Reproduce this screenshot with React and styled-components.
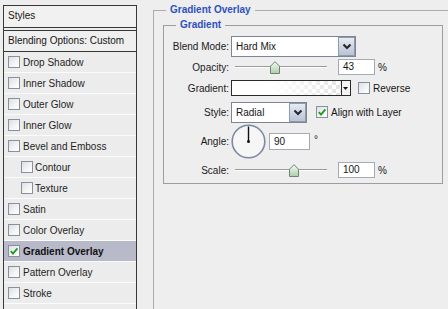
import React from 'react'
import styled, { createGlobalStyle } from 'styled-components'

const GlobalStyle = createGlobalStyle`
  html, body {
    margin: 0;
    padding: 0;
    background: #eeeeee;
  }
  body {
    font-family: "Liberation Sans", Arial, sans-serif;
    font-size: 10px;
    color: #161616;
  }
`

const effects = [
  { label: 'Drop Shadow' },
  { label: 'Inner Shadow' },
  { label: 'Outer Glow' },
  { label: 'Inner Glow' },
  { label: 'Bevel and Emboss' },
  { label: 'Contour', sub: true },
  { label: 'Texture', sub: true },
  { label: 'Satin' },
  { label: 'Color Overlay' },
  { label: 'Gradient Overlay', checked: true, active: true },
  { label: 'Pattern Overlay' },
  { label: 'Stroke' },
]

const CheckMark = () => (
  <svg width="10" height="10" viewBox="0 0 10 10">
    <path d="M1.8 5.2 L4 7.6 L8.4 2.4" fill="none" stroke="#1f9a1f" strokeWidth="1.8" />
  </svg>
)

const Checkbox = ({ checked }) => <CheckBox>{checked && <CheckMark />}</CheckBox>

const Chevron = () => (
  <svg width="10" height="7" viewBox="0 0 10 7">
    <path d="M1.5 1.5 L5 5 L8.5 1.5" fill="none" stroke="#2a2a2a" strokeWidth="2.2" />
  </svg>
)

const Select = ({ value, width }) => (
  <SelectBox $width={width}>
    <SelectValue>{value}</SelectValue>
    <SelectButton>
      <Chevron />
    </SelectButton>
  </SelectBox>
)

const Slider = ({ value, min, max }) => {
  const pct = (value - min) / (max - min)
  return (
    <SliderWrap>
      <Track />
      <Thumb style={{ left: 4 + pct * 92 - 5 }}>
        <svg width="10" height="13" viewBox="0 0 10 13">
          <defs>
            <linearGradient id="thumbFill" x1="0" y1="0" x2="0" y2="1">
              <stop offset="0" stopColor="#f6fbf6" />
              <stop offset="1" stopColor="#a9cfa9" />
            </linearGradient>
          </defs>
          <path d="M0.5 12.5 V5.2 L5 0.7 L9.5 5.2 V12.5 Z" fill="url(#thumbFill)" stroke="#728272" />
        </svg>
      </Thumb>
    </SliderWrap>
  )
}

const Dial = ({ angle }) => {
  const r = (angle * Math.PI) / 180
  return (
    <svg width="35" height="35" viewBox="0 0 35 35">
      <circle cx="17.5" cy="17.5" r="16.3" fill="#f6f6f6" stroke="#7c8a9e" strokeWidth="1.6" />
      <line
        x1="17.5"
        y1="17.5"
        x2={17.5 + Math.cos(r) * 15}
        y2={17.5 - Math.sin(r) * 15}
        stroke="#111"
        strokeWidth="1.4"
      />
      <circle cx="17.5" cy="17.5" r="1.5" fill="#111" />
    </svg>
  )
}

const App = () => {
  return (
    <>
      <GlobalStyle />
      <Window>
        <StylesPanel>
          <PanelHeader>Styles</PanelHeader>
          <BlendingRow>Blending Options: Custom</BlendingRow>
          {effects.map((e) => (
            <EffectRow key={e.label} $sub={e.sub} $active={e.active}>
              <Checkbox checked={e.checked} />
              <span>{e.label}</span>
            </EffectRow>
          ))}
        </StylesPanel>

        <OuterGroup>
          <Legend $inset={3}>Gradient Overlay</Legend>
          <InnerGroup>
            <Legend $inset={8}>Gradient</Legend>
            <FormGrid>
              <Label>Blend Mode:</Label>
              <Controls>
                <Select value="Hard Mix" width={125} />
              </Controls>

              <Label>Opacity:</Label>
              <Controls>
                <Slider value={43} min={0} max={100} />
                <NumberBox>43</NumberBox>
                <Unit>%</Unit>
              </Controls>

              <Label>Gradient:</Label>
              <Controls>
                <Swatch>
                  <SwatchFill />
                  <SwatchButton>
                    <svg width="7" height="14" viewBox="0 0 7 14">
                      <path d="M1 6 H6 L3.5 9 Z" fill="#111" />
                    </svg>
                  </SwatchButton>
                </Swatch>
                <CheckLabel $gap={7}>
                  <Checkbox />
                  <span>Reverse</span>
                </CheckLabel>
              </Controls>

              <Label>Style:</Label>
              <Controls>
                <Select value="Radial" width={76} />
                <CheckLabel $gap={9}>
                  <Checkbox checked />
                  <span>Align with Layer</span>
                </CheckLabel>
              </Controls>

              <Label>Angle:</Label>
              <Controls>
                <Dial angle={90} />
                <NumberBox $width={41} $gap={3}>90</NumberBox>
                <Degree>°</Degree>
              </Controls>

              <Label>Scale:</Label>
              <Controls>
                <Slider value={100} min={10} max={150} />
                <NumberBox>100</NumberBox>
                <Unit>%</Unit>
              </Controls>
            </FormGrid>
          </InnerGroup>
        </OuterGroup>
      </Window>
    </>
  )
}

const Window = styled.div`
  display: flex;
  align-items: flex-start;
  height: 309px;
  overflow: hidden;
`

const StylesPanel = styled.div`
  flex-shrink: 0;
  box-sizing: border-box;
  width: 134px;
  height: 320px;
  margin: 5px 0 0 3px;
  border: 1px solid #383838;
  border-bottom: none;
  background: #ececec;
`

const PanelHeader = styled.div`
  height: 21px;
  line-height: 20px;
  padding-left: 4px;
  border-bottom: 1px solid #383838;
  background: #f1f1f1;
`

const BlendingRow = styled.div`
  height: 20px;
  line-height: 20px;
  margin-top: 2px;
  padding-left: 4px;
  border-top: 1px solid #383838;
  border-bottom: 1px solid #383838;
  background: #efefef;
`

const EffectRow = styled.div`
  display: flex;
  align-items: center;
  gap: ${(p) => (p.$sub ? 2 : 3)}px;
  height: 20px;
  padding-left: ${(p) => (p.$sub ? 17 : 4)}px;
  border-bottom: 1px solid #fbfbfb;
  background: ${(p) => (p.$active ? '#b8bac9' : 'transparent')};
  font-weight: ${(p) => (p.$active ? 'bold' : 'normal')};
  color: ${(p) => (p.$active ? '#111' : '#1e1e1e')};
`

const CheckBox = styled.span`
  display: inline-flex;
  align-items: center;
  justify-content: center;
  flex-shrink: 0;
  box-sizing: border-box;
  width: 12px;
  height: 12px;
  border: 1px solid #87909c;
  background: linear-gradient(135deg, #dcdfe3 0%, #f4f5f6 60%, #ffffff 100%);
`

const OuterGroup = styled.fieldset`
  flex-shrink: 0;
  box-sizing: border-box;
  width: 310px;
  min-height: 320px;
  margin: 4px 0 0 16px;
  padding: 3px 0 0 9px;
  border: 1px solid #ababab;
`

const InnerGroup = styled.fieldset`
  box-sizing: border-box;
  width: 280px;
  margin: 0;
  padding: 5px 0 0 4px;
  border: 1px solid #9d9d9d;
`

const Legend = styled.legend`
  margin-left: ${(p) => p.$inset}px;
  padding: 0 4px;
  line-height: 12px;
  font-weight: bold;
  color: #2d51be;
`

const FormGrid = styled.div`
  display: grid;
  grid-template-columns: 61px 1fr;
  grid-template-rows: 21px 20px 22px 26px 32px 26px;
  column-gap: 2px;
  align-items: center;
`

const Label = styled.div`
  text-align: right;
  color: #1a1a1a;
`

const Controls = styled.div`
  display: flex;
  align-items: center;
`

const SelectBox = styled.div`
  display: flex;
  box-sizing: border-box;
  width: ${(p) => p.$width}px;
  height: 21px;
  border: 1px solid #7d8592;
  background: #fff;
`

const SelectValue = styled.div`
  flex: 1;
  padding-left: 4px;
  line-height: 19px;
`

const SelectButton = styled.div`
  display: flex;
  align-items: center;
  justify-content: center;
  width: 15px;
  border: 1px solid #8e9aae;
  background: linear-gradient(#e6ebf3, #b9c3d5);
`

const SliderWrap = styled.div`
  position: relative;
  display: flex;
  align-items: center;
  box-sizing: border-box;
  width: 100px;
  height: 14px;
  padding: 0 4px;
`

const Track = styled.div`
  flex: 1;
  height: 1px;
  background: #9b9b9b;
  border-bottom: 1px solid #ffffff;
`

const Thumb = styled.div`
  position: absolute;
  top: 1px;
  width: 10px;
  height: 13px;
  line-height: 0;
`

const NumberBox = styled.div`
  box-sizing: border-box;
  width: ${(p) => p.$width || 37}px;
  height: ${(p) => (p.$width ? 17 : 16)}px;
  margin-left: ${(p) => (p.$gap !== undefined ? p.$gap : 7)}px;
  padding-left: 4px;
  line-height: ${(p) => (p.$width ? 15 : 14)}px;
  border: 1px solid #a3abb6;
  background: #fff;
`

const Unit = styled.span`
  margin-left: 3px;
`

const Degree = styled.span`
  align-self: flex-start;
  margin: 10px 0 0 4px;
  font-size: 10px;
`

const Swatch = styled.div`
  display: flex;
  box-sizing: border-box;
  width: 120px;
  height: 16px;
  border: 1px solid #2b2b2b;
`

const SwatchFill = styled.div`
  flex: 1;
  background:
    linear-gradient(to right, #ffffff 0%, #ffffff 35%, rgba(255, 255, 255, 0) 100%),
    repeating-conic-gradient(#e4e4e4 0% 25%, #ffffff 0% 50%) 0 0 / 8px 8px;
`

const SwatchButton = styled.div`
  width: 8px;
  border-left: 1px solid #2b2b2b;
  background: #f4f4f4;
  line-height: 0;
`

const CheckLabel = styled.label`
  display: flex;
  align-items: center;
  gap: 3px;
  margin-left: ${(p) => p.$gap}px;
`

export default App
